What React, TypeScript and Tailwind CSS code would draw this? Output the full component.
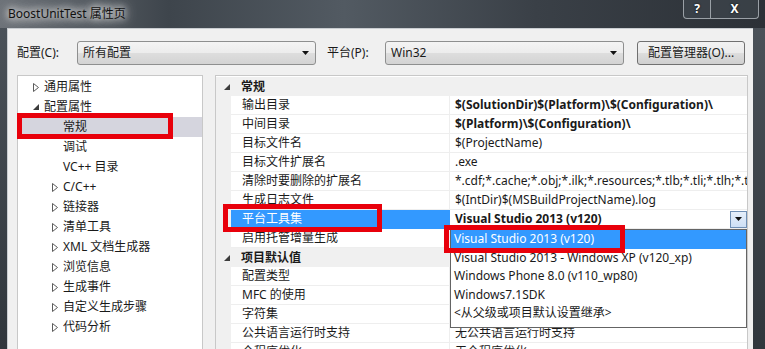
import React from 'react';

type TreeItem = { label: string; level: number; state: 'none' | 'collapsed' | 'expanded'; selected?: boolean };

const treeItems: TreeItem[] = [
  { label: '通用属性', level: 0, state: 'collapsed' },
  { label: '配置属性', level: 0, state: 'expanded' },
  { label: '常规', level: 1, state: 'none', selected: true },
  { label: '调试', level: 1, state: 'none' },
  { label: 'VC++ 目录', level: 1, state: 'none' },
  { label: 'C/C++', level: 1, state: 'collapsed' },
  { label: '链接器', level: 1, state: 'collapsed' },
  { label: '清单工具', level: 1, state: 'collapsed' },
  { label: 'XML 文档生成器', level: 1, state: 'collapsed' },
  { label: '浏览信息', level: 1, state: 'collapsed' },
  { label: '生成事件', level: 1, state: 'collapsed' },
  { label: '自定义生成步骤', level: 1, state: 'collapsed' },
  { label: '代码分析', level: 1, state: 'collapsed' },
];

type Row = { cat?: boolean; name: string; value?: string; bold?: boolean; selected?: boolean };

// values of the rows under the open list are hidden by it
const rows: Row[] = [
  { cat: true, name: '常规' },
  { name: '输出目录', value: '$(SolutionDir)$(Platform)\\$(Configuration)\\', bold: true },
  { name: '中间目录', value: '$(Platform)\\$(Configuration)\\', bold: true },
  { name: '目标文件名', value: '$(ProjectName)' },
  { name: '目标文件扩展名', value: '.exe' },
  { name: '清除时要删除的扩展名', value: '*.cdf;*.cache;*.obj;*.ilk;*.resources;*.tlb;*.tli;*.tlh;*.tmp;*.rsp;*.pgc;*.pgd' },
  { name: '生成日志文件', value: '$(IntDir)$(MSBuildProjectName).log' },
  { name: '平台工具集', value: 'Visual Studio 2013 (v120)', bold: true, selected: true },
  { name: '启用托管增量生成' },
  { cat: true, name: '项目默认值' },
  { name: '配置类型' },
  { name: 'MFC 的使用' },
  { name: '字符集' },
  { name: '公共语言运行时支持', value: '无公共语言运行时支持' },
  { name: '全程序优化', value: '无全程序优化' },
];

const options = [
  'Visual Studio 2013 (v120)',
  'Visual Studio 2013 - Windows XP (v120_xp)',
  'Windows Phone 8.0 (v110_wp80)',
  'Windows7.1SDK',
  '<从父级或项目默认设置继承>',
];

const Collapsed = () => (
  <svg width="6" height="9" viewBox="0 0 6 9">
    <polygon points="0.5,0.5 5.5,4.5 0.5,8.5" fill="#fff" stroke="#5c5c5c" strokeWidth="1" />
  </svg>
);

const Expanded = () => (
  <svg width="6" height="6" viewBox="0 0 6 6">
    <polygon points="6,0 6,6 0,6" fill="#3c3c3c" />
  </svg>
);

const DownArrow = () => (
  <svg width="7" height="4" viewBox="0 0 7 4">
    <polygon points="0,0 7,0 3.5,4" fill="#111" />
  </svg>
);

const Combo = ({ text }: { text: string }) => (
  <div className="w-[239px] h-[24px] flex items-center justify-between pl-[5px] pr-[6px] rounded-[3px] border border-[#8e8f8f] bg-[linear-gradient(180deg,#f4f4f4_0%,#ececec_48%,#dddddd_52%,#d3d3d3_100%)]">
    <span>{text}</span>
    <DownArrow />
  </div>
);

export default function App() {
  return (
    <div className="relative w-[765px] h-[349px] overflow-hidden flex flex-col bg-[linear-gradient(180deg,#4d545b_0%,#30363c_100%)] font-['Noto_Sans','Noto_Sans_CJK_SC',sans-serif] text-[12px] text-[#1a1a1a]">
      {/* title bar */}
      <div className="h-[28px] shrink-0 flex justify-between bg-[linear-gradient(90deg,#6d7278_0%,#3e454c_22%,#525a62_45%,#3a4047_70%,#2c3137_100%)]">
        <div className="pl-[8px] pt-[5px] text-[#111] [text-shadow:0_0_6px_#e8e8e8,0_0_10px_#e8e8e8,0_0_14px_#dcdcdc]">BoostUnitTest 属性页</div>
        <div className="flex h-[19px] mr-[6px]">
          <div className="w-[28px] flex items-center justify-center border border-t-0 border-[#9aa0a6] rounded-bl-[4px] bg-[#3f464d]/70 text-white font-bold text-[12px] [text-shadow:0_0_2px_#000]">?</div>
          <div className="w-[48px] flex items-center justify-center border border-t-0 border-l-0 border-[#9aa0a6] rounded-br-[4px] bg-[#3f464d]/70 text-white font-bold text-[12px] [text-shadow:0_0_2px_#000]">X</div>
        </div>
      </div>

      {/* frame sides + client */}
      <div className="flex-1 min-h-0 flex pl-[7px] pr-[12px]">
        <div className="flex-1 flex flex-col bg-[#f0f0f0] border-l border-t border-[#c9cdd1] pt-[12px] pl-[9px] pr-[5px] min-w-0 min-h-0">
          {/* config row */}
          <div className="h-[24px] shrink-0 flex items-center">
            <span className="w-[60px]">配置(C):</span>
            <Combo text="所有配置" />
            <span className="w-[58px] ml-[11px]">平台(P):</span>
            <Combo text="Win32" />
            <div className="ml-[13px] w-[108px] h-[24px] flex items-center justify-center rounded-[3px] border border-[#707070] bg-[linear-gradient(180deg,#f2f2f2_0%,#ebebeb_48%,#dddddd_52%,#cfcfcf_100%)]">
              配置管理器(O)...
            </div>
          </div>

          {/* panels */}
          <div className="mt-[10px] flex gap-[12px] flex-1 min-h-0">
            {/* tree */}
            <div className="w-[186px] h-[300px] shrink-0 bg-white border border-[#c8c8c8] pt-[1px]">
              {treeItems.map((t) => (
                <div
                  key={t.label}
                  className={`h-[20px] flex items-center ${t.selected ? 'bg-[#d5d5de]' : ''}`}
                  style={{ paddingLeft: 14 + t.level * 19 }}
                >
                  <span className="w-[12px] flex items-center pl-[1px]">
                    {t.state === 'collapsed' && <Collapsed />}
                    {t.state === 'expanded' && <Expanded />}
                  </span>
                  <span>{t.label}</span>
                </div>
              ))}
            </div>

            {/* property grid */}
            <div className="relative flex-1 min-w-0 h-[300px] shrink-0 bg-white border border-[#c8c8c8] pt-[1px] overflow-hidden">
              {rows.map((r) =>
                r.cat ? (
                  <div key={r.name} className="h-[19px] flex items-center bg-[#f0f0f0]">
                    <span className="w-[15px] flex justify-end pr-[1px]">
                      <Expanded />
                    </span>
                    <span className="pl-[10px] font-bold">{r.name}</span>
                  </div>
                ) : (
                  <div key={r.name} className="h-[19px] flex">
                    <span className="w-[15px] bg-[#f0f0f0]" />
                    <span
                      className={`w-[219px] shrink-0 flex items-center pl-[11px] border-b border-r ${
                        r.selected ? 'bg-[#3399ff] text-white border-[#3399ff]' : 'border-[#eeeeee]'
                      }`}
                    >
                      {r.name}
                    </span>
                    <span className="flex-1 min-w-0 flex items-center justify-between pl-[5px] border-b border-[#eeeeee] whitespace-nowrap overflow-hidden">
                      <span className={r.bold ? 'font-bold' : ''}>{r.value}</span>
                      {r.selected && (
                        <span className="w-[17px] h-[17px] shrink-0 flex items-center justify-center border border-[#6f8fb5] bg-[linear-gradient(180deg,#e6effa_0%,#cddff5_100%)]">
                          <DownArrow />
                        </span>
                      )}
                    </span>
                  </div>
                )
              )}

              {/* open list of the toolset row */}
              <div className="absolute left-[234px] right-0 top-[153px] bg-white border border-[#646464] pb-[4px]">
                {options.map((o, i) => (
                  <div
                    key={o}
                    className={`h-[18.5px] flex items-center pl-[3px] whitespace-nowrap ${i === 0 ? 'bg-[#3399ff] text-white' : ''}`}
                  >
                    {o}
                  </div>
                ))}
              </div>
            </div>
          </div>
        </div>
      </div>

      {/* red annotation boxes */}
      <div className="absolute left-[17px] top-[113px] w-[156px] h-[26px] border-[5px] border-[#e8000b]" />
      <div className="absolute left-[223px] top-[204px] w-[159px] h-[28px] border-[5px] border-[#e8000b]" />
      <div className="absolute left-[444px] top-[225px] w-[181px] h-[28px] border-[5px] border-[#e8000b]" />
    </div>
  );
}
